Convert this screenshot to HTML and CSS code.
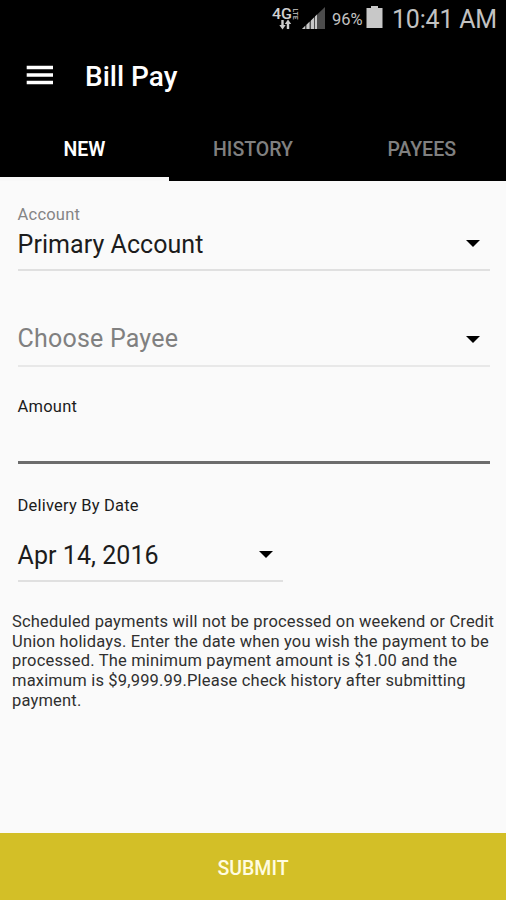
FILE: index.html
```html
<!DOCTYPE html>
<html lang="en">
<head>
<meta charset="utf-8">
<title>Bill Pay</title>
<link rel="stylesheet" href="styles.css">
</head>
<body>
<div class="app">
  <header class="top">
    <div class="status">
      <svg class="network" width="56" height="36" viewBox="0 0 56 36">
        <text class="gen" x="1" y="18.500" textLength="20" lengthAdjust="spacingAndGlyphs">4G</text>
        <text class="lte" transform="translate(21.500 8.500) rotate(90)" textLength="11" lengthAdjust="spacingAndGlyphs">LTE</text>
        <path class="arrows" d="M11.500 20v6M17 29v-6"/>
        <path class="light" d="M8.300 25h6.400l-3.200 4.500zM13.800 24h6.400l-3.200-4.500z"/>
        <path class="dim" d="M54 7v22H31z"/>
        <path class="light" d="M31 29l3-3v3zM35.500 24.700l3-2.900V29h-3zM40 20.400l3-2.900V29h-3zM44 16.500l2-2V29h-2z"/>
      </svg>
      <span class="percent">96%</span>
      <svg class="battery" width="17" height="24" viewBox="0 0 17 24"><path class="light" d="M5 1h7v2h4.500v20H.5V3H5z"/></svg>
      <span class="clock">10:41 AM</span>
    </div>
    <div class="bar">
      <svg class="menu" width="28" height="20" viewBox="0 0 28 20"><path d="M.7 2.500h26.300M.7 10h26.300M.7 17.500h26.300"/></svg>
      <h1>Bill Pay</h1>
    </div>
    <nav class="tabs">
      <a class="tab active"><span>NEW</span></a>
      <a class="tab"><span>HISTORY</span></a>
      <a class="tab"><span>PAYEES</span></a>
    </nav>
  </header>
  <main class="form">
    <section class="field account">
      <span class="label muted">Account</span>
      <div class="select"><span class="value primary">Primary Account</span><i class="caret"></i></div>
    </section>
    <section class="field payee">
      <div class="select"><span class="value hint">Choose Payee</span><i class="caret"></i></div>
    </section>
    <section class="field amount">
      <span class="label">Amount</span>
    </section>
    <section class="field date">
      <span class="label delivery">Delivery By Date</span>
      <div class="select"><span class="value day">Apr 14, 2016</span><i class="caret"></i></div>
    </section>
    <p class="note">Scheduled payments will not be processed on weekend or Credit<br>Union holidays. Enter the date when you wish the payment to be<br>processed. The minimum payment amount is $1.00 and the<br>maximum is $9,999.99.Please check history after submitting<br>payment.</p>
  </main>
  <button class="submit">SUBMIT</button>
</div>
</body>
</html>
```
FILE: styles.css
```css
* { box-sizing: border-box; }
body { margin: 0; font-family: Roboto, "Liberation Sans", sans-serif; color: #1c1c1c; background: #fafafa; }
.app { width: 506px; height: 900px; display: flex; flex-direction: column; overflow: hidden; }
.top { height: 181px; background: #000; flex: none; }
.status { height: 38px; display: flex; align-items: flex-start; justify-content: flex-end; padding-right: 9px; color: #c2c2c2; white-space: nowrap; }
.network { margin-right: 5px; }
.gen { font: 500 15px Roboto, sans-serif; fill: #d0d0d0; }
.lte { font: 700 8px Roboto, sans-serif; fill: #aaa; }
.arrows { stroke: #ccc; stroke-width: 2.400; fill: none; }
.light { fill: #c8c8c8; }
.dim { fill: #4c4c4c; }
.percent { font-size: 16.500px; line-height: 39px; width: 31px; margin-right: 3px; }
.battery { margin-top: 5px; margin-right: 9px; }
.clock { font-size: 25px; line-height: 40px; width: 105px; letter-spacing: -.2px; }
.bar { height: 78px; display: flex; align-items: center; padding: 0 26px; }
.menu { stroke: #fff; stroke-width: 3.500; margin-right: 31px; margin-top: -4px; }
h1 { margin: 0; font-size: 28px; line-height: 32px; font-weight: 500; color: #fff; }
.tabs { height: 65px; display: flex; }
.tab { flex: 1; padding-top: 22px; text-align: center; font-size: 19.500px; line-height: 24px; font-weight: 500; color: #808080; }
.tab.active { color: #fff; font-weight: 600; border-bottom: 4px solid #f8f8f8; }
.form { flex: 1; padding: 0 16px 0 17.600px; }
.field { display: flex; flex-direction: column; }
.label { font-size: 16.500px; line-height: 20px; letter-spacing: .2px; }
.muted { color: #858585; }
.select { display: flex; align-items: center; justify-content: space-between; padding-right: 10px; }
.value { font-size: 25px; line-height: 32px; white-space: nowrap; letter-spacing: .05px; }
.hint { color: #808080; letter-spacing: .2px; }
.caret { border: 7px solid transparent; border-top-color: #000; border-bottom: 0; }
.account { height: 90px; padding-top: 24px; border-bottom: 2px solid #e0e0e0; }
.account .select { margin-top: 4px; }
.account .caret { margin-top: -3px; }
.payee { height: 96px; padding-top: 52px; border-bottom: 2px solid #e8e8e8; }
.amount { height: 97px; padding-top: 30px; border-bottom: 3px solid #6c6c6c; }
.date { width: 265px; height: 118px; padding-top: 32px; border-bottom: 2px solid #e0e0e0; }
.date .select { margin-top: 24px; }
.date .caret { margin-top: -3px; }
.note { margin: 30px -5px 0 -5.600px; font-size: 16.500px; letter-spacing: .18px; line-height: 19.700px; color: #303030; white-space: nowrap; }
.submit { flex: none; height: 67px; border: 0; padding: 3px 0 0; background: #d3bf27; color: #fffce0; font-family: inherit; font-size: 19.500px; font-weight: 500; }
```
